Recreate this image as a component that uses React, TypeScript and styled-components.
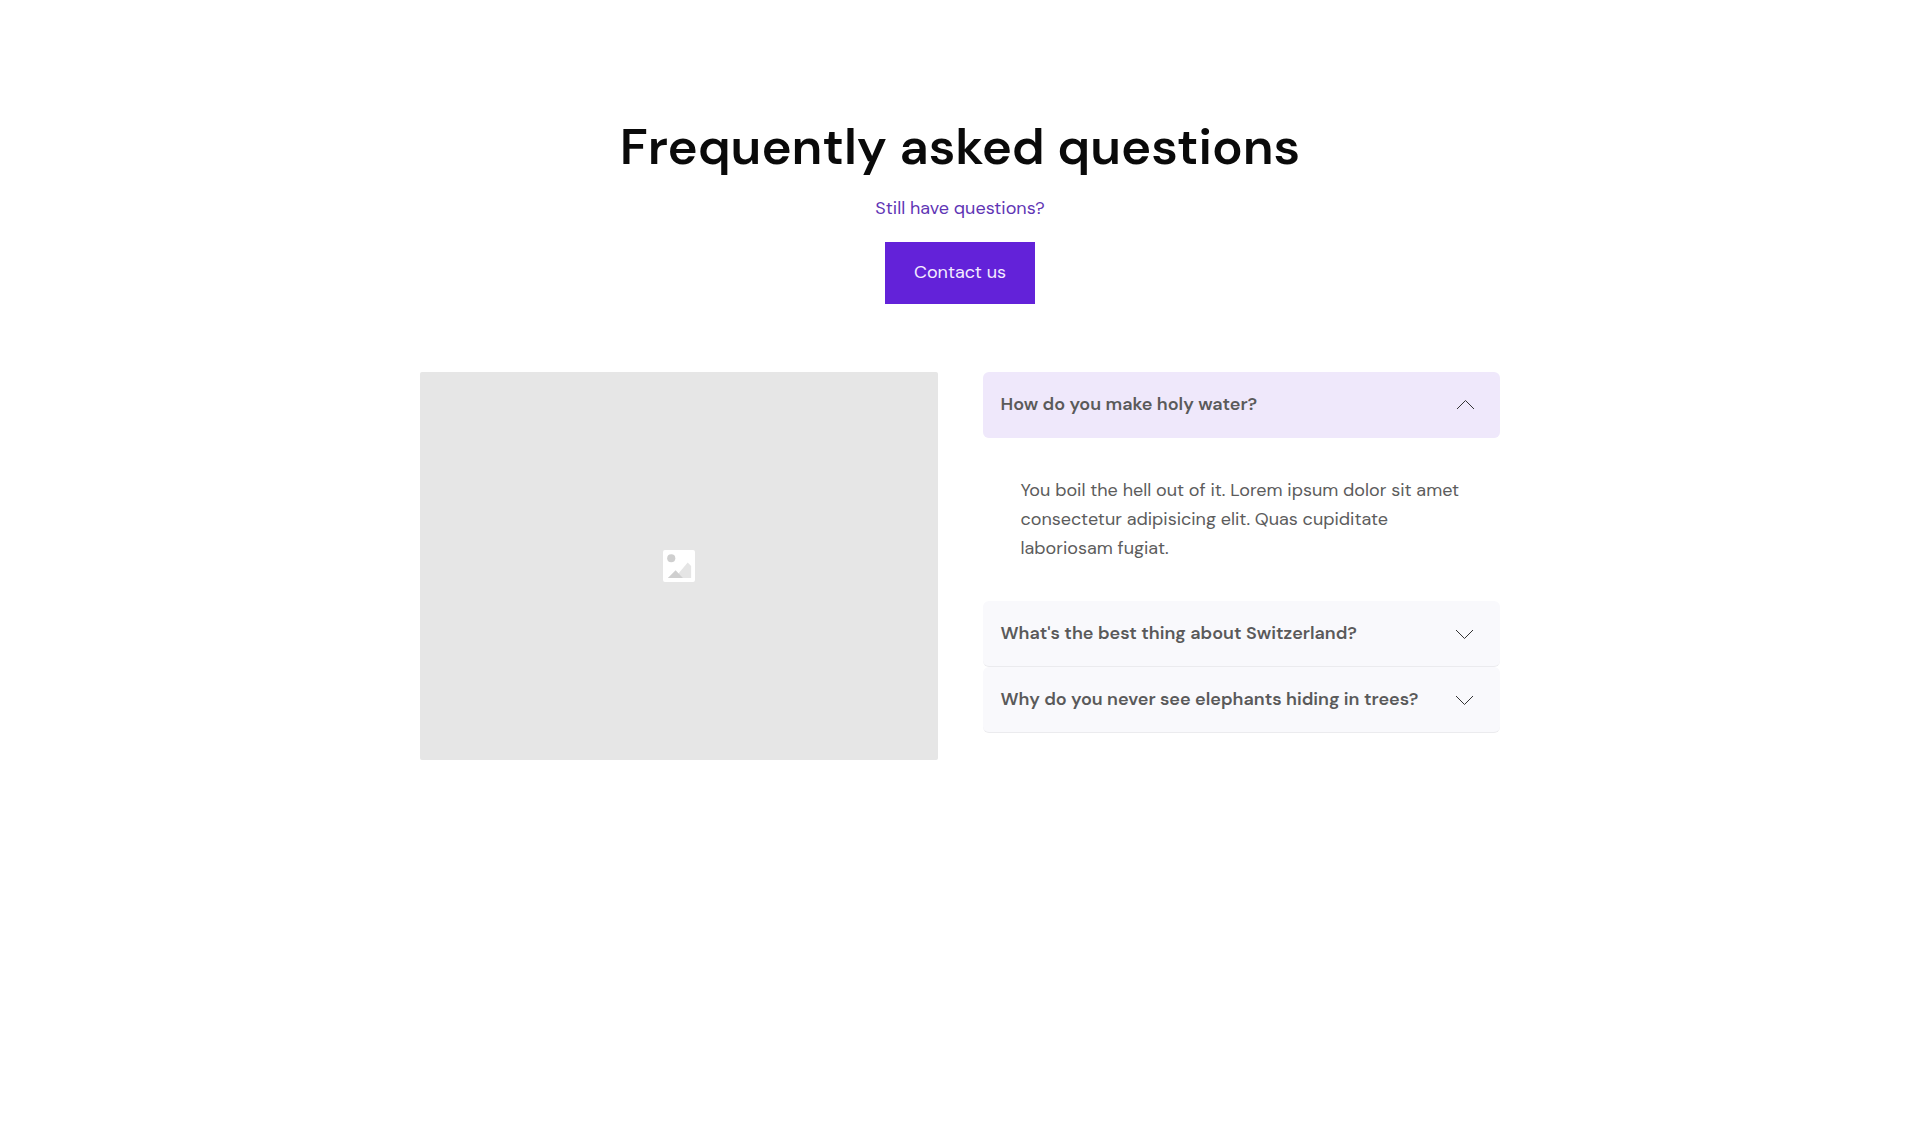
import React, { useState } from "react";
import styled, { createGlobalStyle } from "styled-components";

const GlobalStyle = createGlobalStyle`
  *, *::before, *::after { box-sizing: border-box; }
  body {
    margin: 0;
    background: #fff;
    color: #5c5c5c;
    font-family: "DM Sans", Inter, "Liberation Sans", sans-serif;
    font-size: 18px;
    line-height: 29px;
  }
`;

const Section = styled.main`
  max-width: 1128px;
  margin: 0 auto;
  padding: 112px 24px;
`;

const Header = styled.header`
  display: flex;
  flex-direction: column;
  align-items: center;
  text-align: center;
  margin-bottom: 68px;
`;

const Title = styled.h1`
  margin: 0 0 12px;
  color: #0a0a0a;
  font-size: 51px;
  font-weight: 600;
  line-height: 70px;
`;

const Subtitle = styled.p`
  margin: 0 0 19px;
  color: #5f35b5;
`;

const ContactButton = styled.button`
  min-width: 150px;
  height: 62px;
  padding: 0 24px 2px;
  border: 0;
  background: #6322d9;
  color: #f3ecff;
  font: inherit;
  cursor: pointer;
`;

const Columns = styled.div`
  display: grid;
  grid-template-columns: repeat(2, minmax(0, 1fr));
  gap: 45px;
  align-items: start;

  @media (max-width: 800px) {
    grid-template-columns: 1fr;
  }
`;

const Placeholder = styled.div`
  display: flex;
  align-items: center;
  justify-content: center;
  aspect-ratio: 4 / 3;
  border-radius: 2px;
  background: #e6e6e6;
`;

const Question = styled.h2`
  margin: 0;
  font-size: 18px;
`;

const Toggle = styled.button<{ $open: boolean }>`
  display: flex;
  align-items: center;
  justify-content: space-between;
  width: 100%;
  min-height: 66px;
  padding: 16px 25px 17px 18px;
  border: 0;
  border-bottom: 1px solid ${(p) => (p.$open ? "#efe8fb" : "#ebebee")};
  border-radius: 6px;
  background: ${(p) => (p.$open ? "#efe8fb" : "#f9f9fc")};
  color: #5a5a5a;
  font: inherit;
  font-weight: 600;
  text-align: left;
  cursor: pointer;
`;

const Chevron = styled.svg<{ $open: boolean }>`
  flex: none;
  transform: ${(p) => (p.$open ? "rotate(180deg)" : "none")};
`;

const Answer = styled.p`
  margin: 0;
  padding: 38px;
`;

const items = [
  {
    question: "How do you make holy water?",
    answer:
      "You boil the hell out of it. Lorem ipsum dolor sit amet consectetur adipisicing elit. Quas cupiditate laboriosam fugiat.",
  },
  {
    question: "What's the best thing about Switzerland?",
    answer: "I don't know, but the flag is a big plus.",
  },
  {
    question: "Why do you never see elephants hiding in trees?",
    answer: "Because they're so good at it.",
  },
];

function PictureIcon() {
  return (
    <svg width="32" height="32" viewBox="0 0 33 33" aria-hidden="true">
      <rect width="33" height="33" rx="2" fill="#fff" />
      <circle cx="8.5" cy="8.5" r="4.2" fill="#cfcfcf" />
      <path d="M12 29 25.5 13l3.500 3.500V29Z" fill="#e5e5e5" />
      <path d="m5 29 8-8 7.500 8Z" fill="#cfcfcf" />
    </svg>
  );
}

export default function App() {
  const [openIndex, setOpenIndex] = useState(0);

  return (
    <>
      <GlobalStyle />
      <Section>
        <Header>
          <Title>Frequently asked questions</Title>
          <Subtitle>Still have questions?</Subtitle>
          <ContactButton type="button">Contact us</ContactButton>
        </Header>
        <Columns>
          <Placeholder>
            <PictureIcon />
          </Placeholder>
          <div>
            {items.map((item, index) => {
              const open = index === openIndex;
              return (
                <section key={item.question}>
                  <Question>
                    <Toggle
                      type="button"
                      $open={open}
                      aria-expanded={open}
                      onClick={() => setOpenIndex(open ? -1 : index)}
                    >
                      {item.question}
                      <Chevron $open={open} width="20" height="20" viewBox="0 0 20 20" aria-hidden="true">
                        <path
                          d={open ? "m1 5 8.500 8.500L18 5" : "m1 7 8.500 8.500L18 7"}
                          fill="none"
                          stroke="#333"
                          strokeWidth="1"
                        />
                      </Chevron>
                    </Toggle>
                  </Question>
                  {open && <Answer>{item.answer}</Answer>}
                </section>
              );
            })}
          </div>
        </Columns>
      </Section>
    </>
  );
}
